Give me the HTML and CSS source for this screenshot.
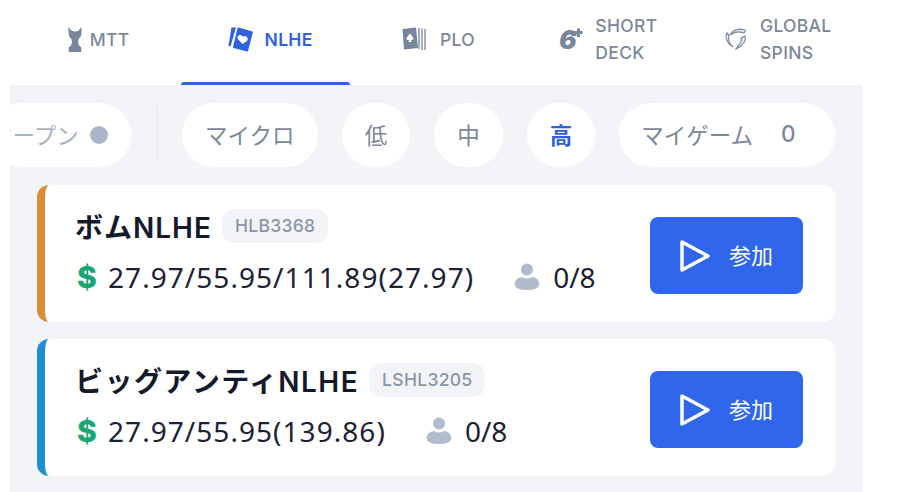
FILE: index.html
```html
<!DOCTYPE html>
<html>
<head>
<meta charset="UTF-8">
<title>NLHE</title>
<link rel="stylesheet" href="styles.css">
</head>
<body>

<div class="app">
  <div class="tabs">
    <div class="tab tab-mtt">
      <svg class="tab-icon" width="16" height="25" viewBox="0 0 16 26"><path d="M1 0L4.500 4Q8 5.500 11.500 4L15 0L14.500 8Q14 11 11.500 13Q10.500 16 12 19L14.500 21V26H1.500V21L4 19Q5.500 16 4.500 13Q2 11 1.500 8Z" fill="#77869a"/></svg>
      <span>MTT</span>
    </div>
    <div class="tab active">
      <svg class="tab-icon" width="25" height="25" viewBox="0 0 25 25"><path d="M3.500 0.500L8 0.500L2.500 19.500L0.500 18.500Z" fill="#2f62dc"/><path d="M10.500 0.500L24.500 4.500Q25 5 24.800 5.500L20 24Q19.500 24.800 19 24.500L5.500 21Q4.800 20.500 5 20L9.500 1Q10 0.300 10.500 0.500Z" fill="#2f62dc"/><path d="M14.500 17L9.800 12Q8.500 8.500 12 8Q14 8 15 9.800Q16.800 8.500 18.700 9.500Q20.500 11.500 19 14Z" fill="#fff"/></svg>
      <span>NLHE</span>
    </div>
    <div class="tab tab-plo">
      <svg class="tab-icon" width="24" height="24" viewBox="0 0 24 24"><path d="M0.500 2L14 0.500L16 21L2 22.500Z" fill="#77869a"/><path d="M8 6.500Q11 9.500 11.500 11.500Q11.500 13.500 9 13L9.500 15H6.500L7 13Q4.500 13.500 4.500 11.500Q5 9.500 8 6.500Z" fill="#fff"/><path d="M17 1V22M20 1.500V23M23 2V23" stroke="#77869a" stroke-width="1.300" fill="none"/></svg>
      <span>PLO</span>
    </div>
    <div class="tab">
      <svg class="tab-icon" width="24" height="24" viewBox="0 0 24 24"><text x="0" y="21.500" class="six">6</text><path d="M15 5.500H23.500M19.500 1.500V10" stroke="#77869a" stroke-width="3" fill="none"/></svg>
      <span>SHORT<br>DECK</span>
    </div>
    <div class="tab tab-global">
      <svg class="tab-icon" width="24" height="24" viewBox="0 0 24 24" fill="#dfe3e9" stroke="#77869a" stroke-width="1.100"><path d="M6 8Q11 0 21 3Q22.500 5 19 6Q13 3 6 8Z"/><path d="M3 6Q-1 13 9 20Q3 14 5 8Z"/><path d="M21 9Q23 17 12 22Q14 19 15 18Q18 15 17 11Z"/></svg>
      <span>GLOBAL<br>SPINS</span>
    </div>
  </div>

  <div class="content">
    <div class="filters">
      <div class="pill pill-open">オープン<i class="dot"></i></div>
      <div class="divider"></div>
      <div class="pill pill-micro">マイクロ</div>
      <div class="pill round">低</div>
      <div class="pill round">中</div>
      <div class="pill round selected">高</div>
      <div class="pill pill-mine">マイゲーム<span>0</span></div>
    </div>

    <div class="card orange">
      <div class="info">
        <div class="title-row">
          <span class="title">ボムNLHE</span>
          <span class="tag">HLB3368</span>
        </div>
        <div class="stake-row">
          <span class="dollar">$</span>
          <span>27.97/55.95/111.89(27.97)</span>
          <svg class="person" width="26" height="27" viewBox="0 0 26 27"><circle cx="13" cy="6.500" r="6" fill="#b0bccb"/><path d="M0.500 21Q1 15 8 14Q13 17 18 14Q25 15 25.500 21Q25 27 13 27Q1 27 0.500 21Z" fill="#b0bccb"/></svg>
          <span class="seats">0/8</span>
        </div>
      </div>
      <button class="join">
        <svg width="30" height="32" viewBox="0 0 30 32"><path d="M2 2L28 16L2 30Z" fill="none" stroke="#fff" stroke-width="3.500" stroke-linejoin="round"/></svg>
        <span>参加</span>
      </button>
    </div>

    <div class="card blue">
      <div class="info">
        <div class="title-row">
          <span class="title">ビッグアンティNLHE</span>
          <span class="tag">LSHL3205</span>
        </div>
        <div class="stake-row">
          <span class="dollar">$</span>
          <span>27.97/55.95(139.86)</span>
          <svg class="person" width="26" height="27" viewBox="0 0 26 27"><circle cx="13" cy="6.500" r="6" fill="#b0bccb"/><path d="M0.500 21Q1 15 8 14Q13 17 18 14Q25 15 25.500 21Q25 27 13 27Q1 27 0.500 21Z" fill="#b0bccb"/></svg>
          <span class="seats">0/8</span>
        </div>
      </div>
      <button class="join">
        <svg width="30" height="32" viewBox="0 0 30 32"><path d="M2 2L28 16L2 30Z" fill="none" stroke="#fff" stroke-width="3.500" stroke-linejoin="round"/></svg>
        <span>参加</span>
      </button>
    </div>
  </div>
</div>

</body>
</html>
```

FILE: styles.css
```css
body {
  margin: 0;
  padding-left: 10px;
  background-color: #fff;
  font-family: 'Inter', 'Noto Sans CJK JP', sans-serif;
  overflow: hidden;
}
.app {
  width: 852px;
  height: 492px;
  overflow: hidden;
}

.tabs {
  display: flex;
  height: 85px;
  background-color: #fff;
}
.tab {
  position: relative;
  width: 20%;
  box-sizing: border-box;
  padding-left: 4px;
  padding-bottom: 7px;
  display: flex;
  align-items: center;
  justify-content: center;
  gap: 12px;
  color: #7c8898;
  font-size: 17.5px;
  font-weight: 500;
  line-height: 27px;
  letter-spacing: 0.3px;
}
.tab-mtt {
  padding-left: 6px;
  gap: 7px;
}
.tab-plo {
  padding-left: 5px;
  gap: 14px;
}
.tab-global {
  padding-left: 2px;
  gap: 12px;
}
.tab-icon {
  flex-shrink: 0;
  overflow: visible;
}
.six {
  font-family: 'Inter', sans-serif;
  font-size: 26px;
  font-weight: 900;
  font-style: italic;
  fill: #77869a;
}
.tab.active {
  padding-left: 9px;
  color: #2f62dc;
  font-weight: 600;
}
.tab.active::after {
  content: "";
  position: absolute;
  left: 1px;
  right: 1px;
  bottom: 0;
  height: 3px;
  border-radius: 3px 3px 0 0;
  background-color: #2f62dc;
}

.content {
  height: 407px;
  background-color: #f2f4f7;
  padding: 18px 27px 0;
  box-sizing: border-box;
}

.filters {
  display: flex;
  align-items: center;
  gap: 24px;
  height: 64px;
  margin-bottom: 18px;
}
.pill {
  flex-shrink: 0;
  height: 64px;
  box-sizing: border-box;
  padding-bottom: 3px;
  border-radius: 32px;
  background-color: #fff;
  display: flex;
  align-items: center;
  justify-content: center;
  color: #7c8898;
  font-size: 22.5px;
}
.pill-micro {
  width: 136px;
}
.pill.round {
  width: 68.500px;
}
.pill.selected {
  color: #2f62dc;
  font-weight: 700;
}
.pill-open {
  margin-left: -47px;
  margin-right: 1px;
  padding-right: 23px;
  color: #a9b4c2;
  gap: 11px;
}
.dot {
  width: 18px;
  height: 18px;
  margin-top: 3px;
  border-radius: 50%;
  background-color: #a9b6c8;
}
.divider {
  flex-shrink: 0;
  width: 2px;
  height: 56px;
  background-color: #e9ecf0;
}
.pill-mine {
  width: 216px;
  justify-content: flex-start;
  padding-left: 22px;
  gap: 28px;
}
.pill-mine span {
  font-weight: 500;
}

.card {
  display: flex;
  align-items: center;
  justify-content: space-between;
  width: 798px;
  height: 136.500px;
  box-sizing: border-box;
  margin-bottom: 17.500px;
  padding: 0 32px 0 30px;
  background-color: #fff;
  border-left: 8px solid #000;
  border-radius: 12px;
}
.card.orange {
  border-left-color: #db8c35;
}
.card.blue {
  border-left-color: #1e8fd5;
}

.info {
  display: flex;
  flex-direction: column;
  gap: 17px;
  margin-top: -4px;
}
.title-row {
  display: flex;
  align-items: center;
  gap: 10px;
  height: 34px;
}
.title {
  color: #141a2b;
  font-size: 28px;
  font-weight: 600;
  letter-spacing: 1px;
}
.blue .title {
  letter-spacing: 1.450px;
}
.tag {
  padding: 0 13px;
  height: 34px;
  line-height: 34px;
  border-radius: 12px;
  background-color: #f2f4f8;
  color: #8a95a5;
  font-size: 17.5px;
  font-weight: 500;
  letter-spacing: 0.3px;
}
.stake-row {
  display: flex;
  align-items: center;
  height: 34px;
  color: #1c2233;
  font-family: 'Noto Sans', sans-serif;
  font-size: 28px;
  letter-spacing: 1.050px;
}
.seats {
  letter-spacing: 0;
}
.dollar {
  width: 33px;
  padding-left: 2px;
  box-sizing: border-box;
  color: #18a773;
  font-family: 'Inter', sans-serif;
  font-size: 30px;
  font-weight: 800;
  letter-spacing: 0;
}
.person {
  margin: 0 13px 0 40px;
}

.join {
  width: 153px;
  height: 77px;
  margin-top: 5px;
  border: none;
  border-radius: 8px;
  background-color: #2f66ec;
  display: flex;
  align-items: center;
  justify-content: center;
  gap: 19px;
  color: #fff;
  font-family: 'Noto Sans CJK JP', sans-serif;
  font-size: 22px;
}
.join span {
  margin-top: -4px;
}
```
